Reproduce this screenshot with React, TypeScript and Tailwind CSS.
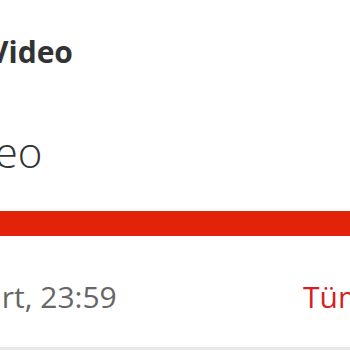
import React from 'react';

export default function App() {
  return (
    <div
      className="w-[350px] h-[350px] overflow-hidden bg-white flex flex-col"
      style={{ fontFamily: '"Open Sans", "Noto Sans", sans-serif' }}
    >
      {/* Başlık */}
      <div className="mt-[32px] h-[40px] leading-[40px] text-[30px] font-bold text-[#333333] whitespace-nowrap -ml-[11px]">
        Video
      </div>

      {/* Paket adı */}
      <div className="mt-[52px] h-[56px] leading-[56px] text-[42px] font-light text-[#333333] whitespace-nowrap -ml-[64px]">
        Video
      </div>

      {/* Kullanım çubuğu */}
      <div className="mt-[31px] h-[25px] w-full bg-[#e2230a] shrink-0" />

      {/* Tarih + bağlantı */}
      <div className="mt-[43px] h-[36px] leading-[36px] text-[30px] flex whitespace-nowrap">
        <span className="-ml-[84px] w-[387px] shrink-0 text-[#666666]">31 Mart, 23:59</span>
        <span className="shrink-0 text-[#d81e1e]">Tümünü gör</span>
      </div>

      <div className="mt-auto h-[3px] w-full bg-[#e8e8e8] shrink-0" />
    </div>
  );
}
